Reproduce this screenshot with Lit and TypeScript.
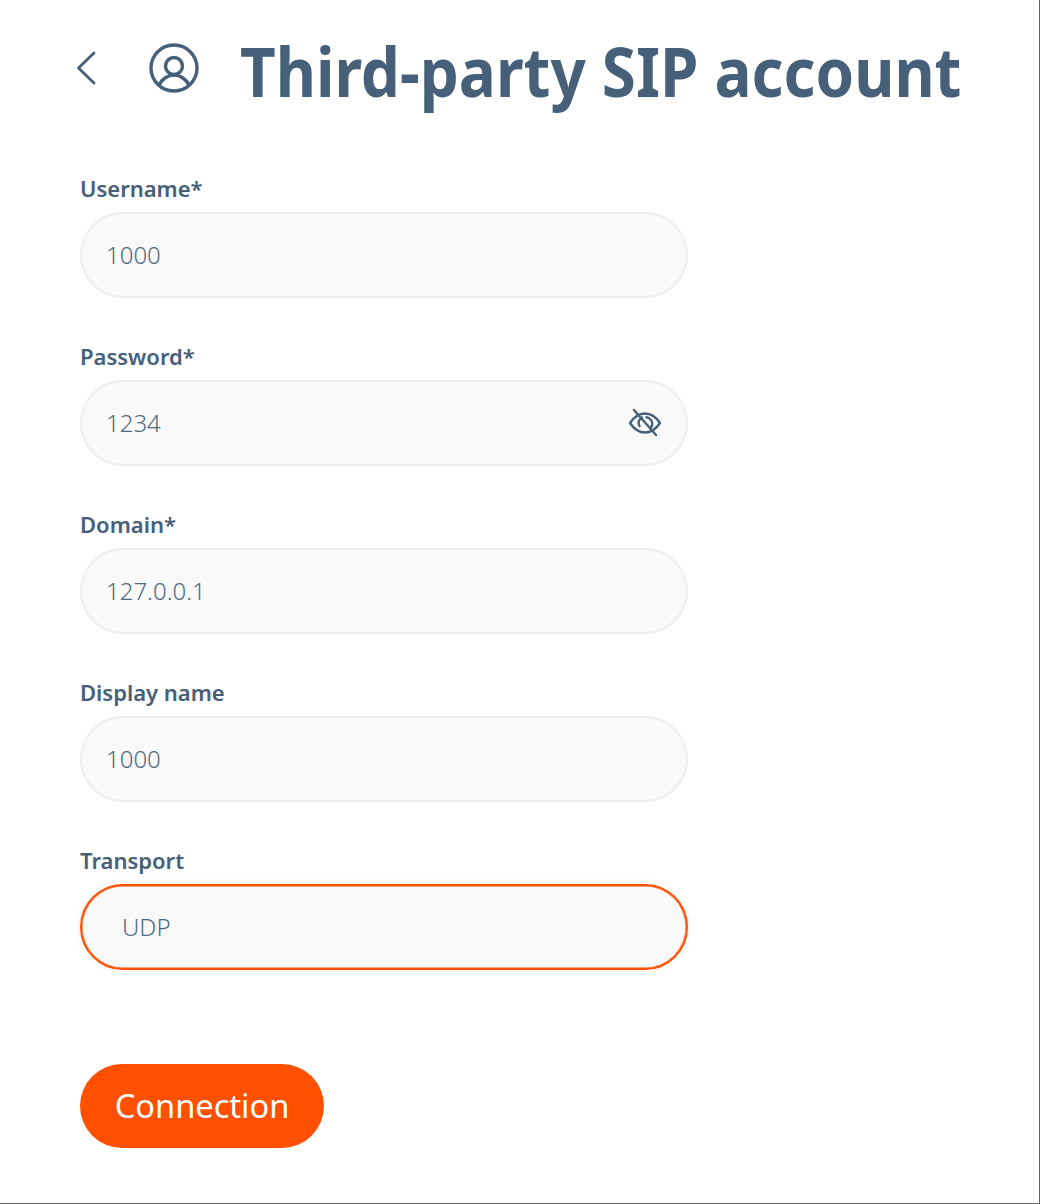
import { LitElement, html, css } from "lit";
import { customElement } from "lit/decorators.js";

const eyeOff = html`<svg class="eye" viewBox="0 0 32 32" fill="none" stroke="#46607a" stroke-width="2.4" stroke-linecap="round" stroke-linejoin="round">
  <path d="M1 16c4-6 9-9.500 15-9.500s11 3.500 15 9.500c-4 6-9 9.500-15 9.500S5 22 1 16z"/>
  <path d="M13 10.500a6 6 0 0 0-2.500 8.500M21.500 21a6 6 0 0 0 0-8.500A6 6 0 0 0 17.500 10.200"/>
  <path d="M5 3l22 25"/>
</svg>`;

@customElement("app-root")
export class AppRoot extends LitElement {
  static styles = css`
    :host { display: block; width: 1040px; height: 1204px; box-sizing: border-box; background: #fff; border-right: 1px solid #666; border-bottom: 1px solid #666; font-family: "Noto Sans", sans-serif; color: #46607a; }
    .head { display: flex; align-items: center; padding: 34px 0 0 76px; height: 76px; }
    .back { width: 22px; height: 36px; margin: 0 51px 8px 0; flex: none; }
    .user { width: 50px; height: 50px; margin: 0 41px 8px 0; flex: none; }
    h1 { margin: 0; padding-bottom: 2px; font-size: 68px; line-height: 74px; font-weight: 700; color: #46607a; white-space: nowrap; transform: scaleX(.91); transform-origin: left center; }
    form { display: flex; flex-direction: column; gap: 44px; padding: 64px 0 0 80px; width: 608px; }
    .field { display: flex; flex-direction: column; gap: 10px; }
    label { font-size: 22px; line-height: 28px; font-weight: 600; }
    .input { box-sizing: border-box; height: 86px; border: 2px solid #eeeeee; border-radius: 43px; background: #f9f9f9; display: flex; align-items: center; justify-content: space-between; padding: 0 25px 2px 24px; font-size: 24px; font-weight: 300; color: #526a80; }
    .select { border-color: #ff5000; box-shadow: 0 0 8px rgba(0,0,0,.08), inset 0 0 0 .5px #ff5000; padding-left: 40px; }
    .eye { width: 32px; height: 32px; margin-top: 2px; }
    button { display: block; margin: 94px 0 0 80px; width: 244px; height: 84px; border: 0; border-radius: 42px; background: #ff5000; color: #fff; font: 400 32.600px "Noto Sans", sans-serif; padding: 0 0 2px; }
  `;
  field(label: string, value: string, extra: unknown = "", cls = "") {
    return html`<div class="field"><label>${label}</label><div class="input ${cls}"><span>${value}</span>${extra}</div></div>`;
  }
  render() {
    return html`
      <div class="head">
        <svg class="back" viewBox="0 0 22 36" fill="none" stroke="#46607a" stroke-width="2.800" stroke-linecap="round" stroke-linejoin="round"><path d="M18 3L2.500 18 18 33"/></svg>
        <svg class="user" viewBox="0 0 50 50" fill="none" stroke="#46607a" stroke-width="3.400"><circle cx="25" cy="25" r="23"/><circle cx="25" cy="23" r="8.500"/><path d="M10 42c3-6 9-10 15-10s12 4 15 10"/></svg>
        <h1>Third-party SIP account</h1>
      </div>
      <form>
        ${this.field("Username*", "1000")}
        ${this.field("Password*", "1234", eyeOff)}
        ${this.field("Domain*", "127.0.0.1")}
        ${this.field("Display name", "1000")}
        ${this.field("Transport", "UDP", "", "select")}
      </form>
      <button>Connection</button>
    `;
  }
}
